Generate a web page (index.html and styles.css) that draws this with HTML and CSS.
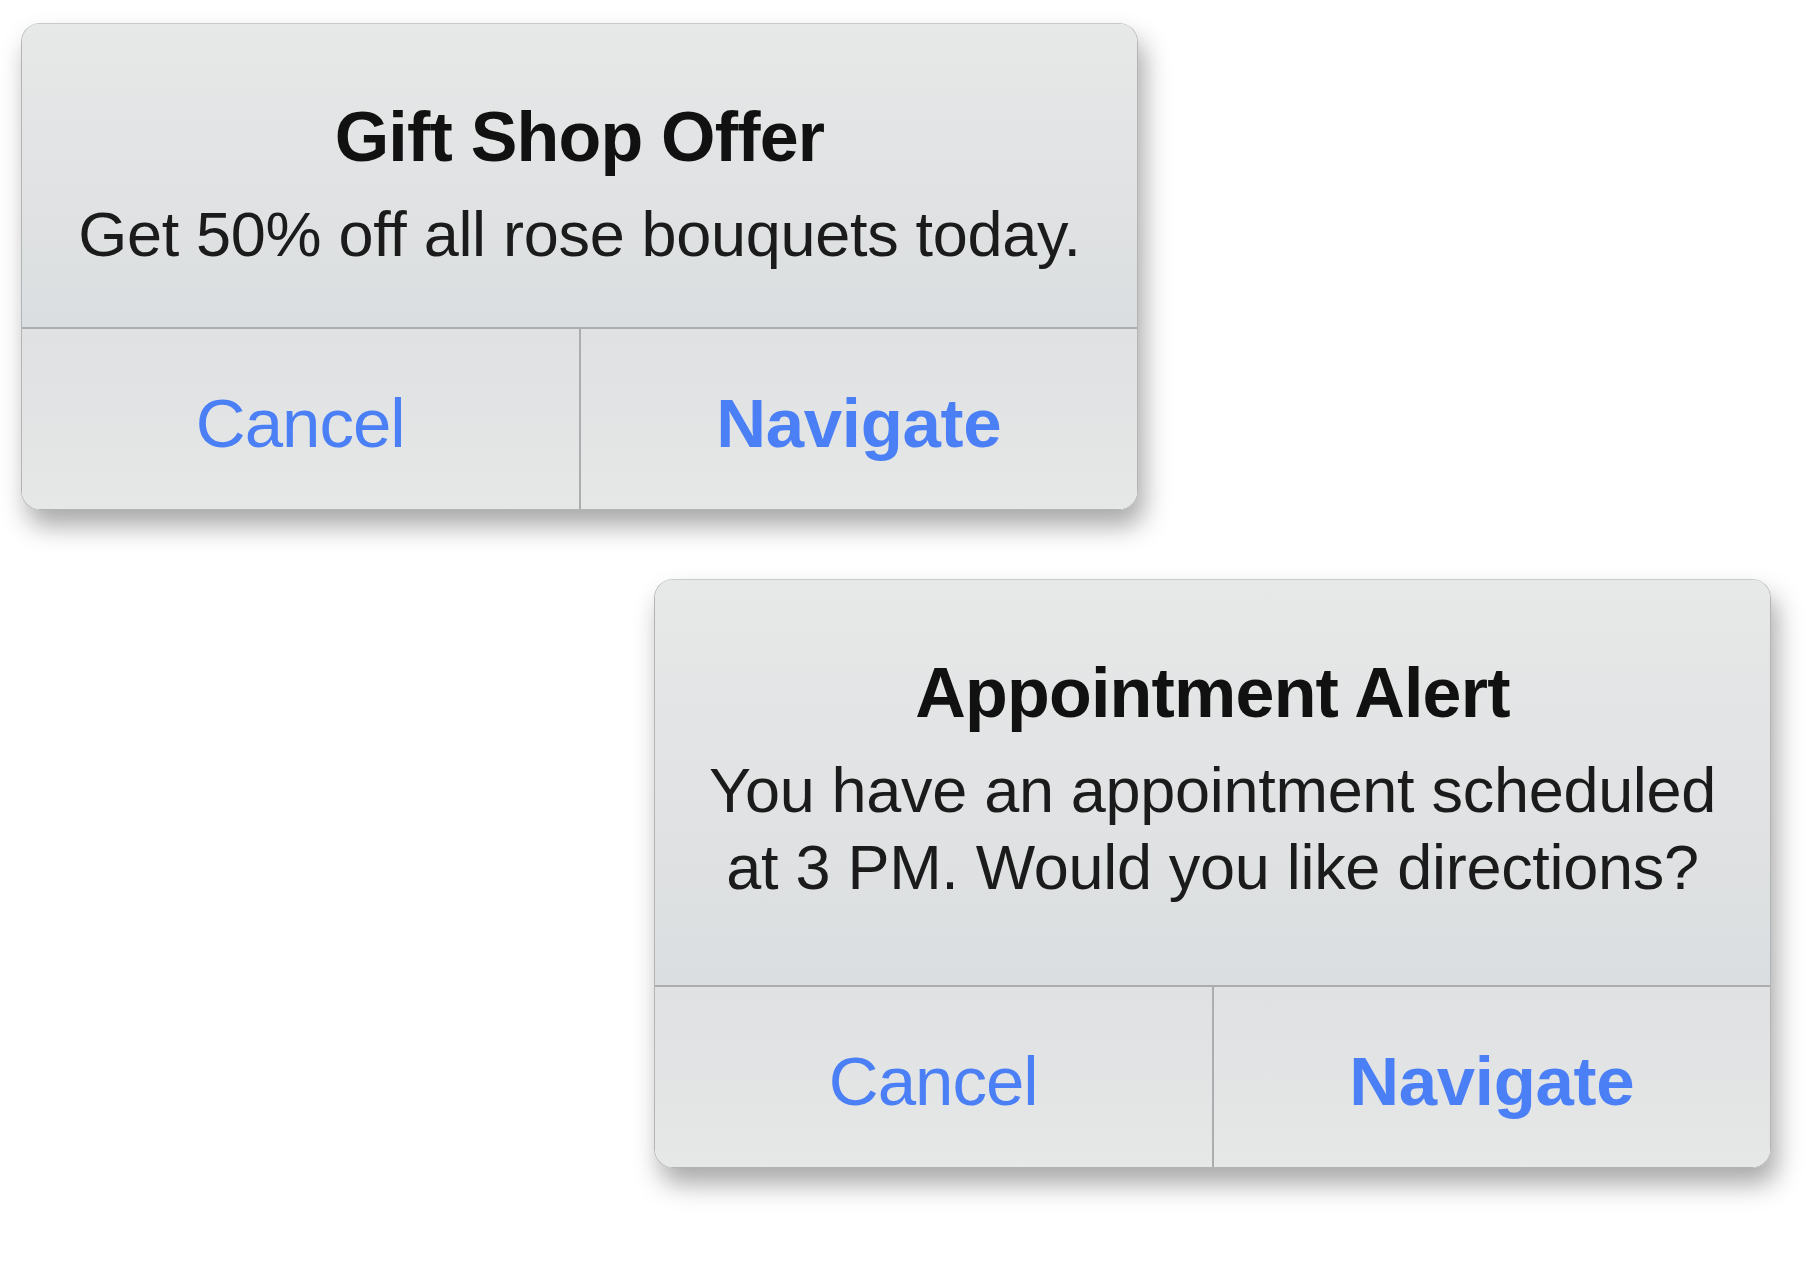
FILE: index.html
```html
<!DOCTYPE html>
<html lang="en">
<head>
    <meta charset="UTF-8">
    <meta name="viewport" content="width=device-width, initial-scale=1.0">
    <title>Alerts</title>
    <link rel="stylesheet" href="styles.css">
</head>
<body>
    <div class="stage">
        <div class="alert alert-left">
            <div class="alert-body">
                <h2 class="alert-title">Gift Shop Offer</h2>
                <p class="alert-text">Get 50% off all rose bouquets today.</p>
            </div>
            <div class="alert-actions">
                <button class="btn btn-cancel">Cancel</button>
                <button class="btn btn-main">Navigate</button>
            </div>
        </div>

        <div class="alert alert-right">
            <div class="alert-body alert-body-long">
                <h2 class="alert-title">Appointment Alert</h2>
                <p class="alert-text">You have an appointment scheduled at 3 PM. Would you like directions?</p>
            </div>
            <div class="alert-actions">
                <button class="btn btn-cancel">Cancel</button>
                <button class="btn btn-main">Navigate</button>
            </div>
        </div>
    </div>
</body>
</html>
```

FILE: styles.css
```css
body {
    margin: 0;
    background: #fff;
    font-family: "Liberation Sans", Arial, sans-serif;
}
.stage {
    display: flex;
    flex-direction: column;
    gap: 69px;
    padding: 23px 40px 90px 21px;
}
.alert {
    width: 1115px;
    border: 1px solid #b3b4b5;
    border-top-color: #c9caca;
    border-radius: 19px;
    overflow: hidden;
    box-shadow: 6px 16px 26px rgba(0, 0, 0, 0.34);
}
.alert-left {
    align-self: flex-start;
}
.alert-right {
    align-self: flex-end;
}
.alert-body {
    padding: 73px 40px 54px;
    text-align: center;
    background: linear-gradient(#e7e8e8, #dbdee0);
}
.alert-body-long {
    padding-bottom: 79px;
}
.alert-title {
    margin: 0;
    font-size: 70px;
    line-height: 80px;
    font-weight: bold;
    letter-spacing: -0.8px;
    color: #111;
}
.alert-text {
    margin: 19px 0 0;
    font-size: 63px;
    line-height: 77px;
    letter-spacing: -0.3px;
    color: #1b1b1b;
}
.alert-actions {
    display: flex;
    border-top: 2px solid #abadae;
    background: linear-gradient(#dfe1e2, #e6e7e7);
}
.btn {
    flex: 1;
    height: 180px;
    padding: 8px 0 0;
    border: none;
    background: none;
    font-family: inherit;
    font-size: 69px;
    color: #4a7ff5;
    cursor: pointer;
}
.btn-cancel {
    border-right: 2px solid #abadae;
    letter-spacing: -1px;
}
.btn-main {
    font-weight: bold;
    letter-spacing: -0.3px;
}
```
